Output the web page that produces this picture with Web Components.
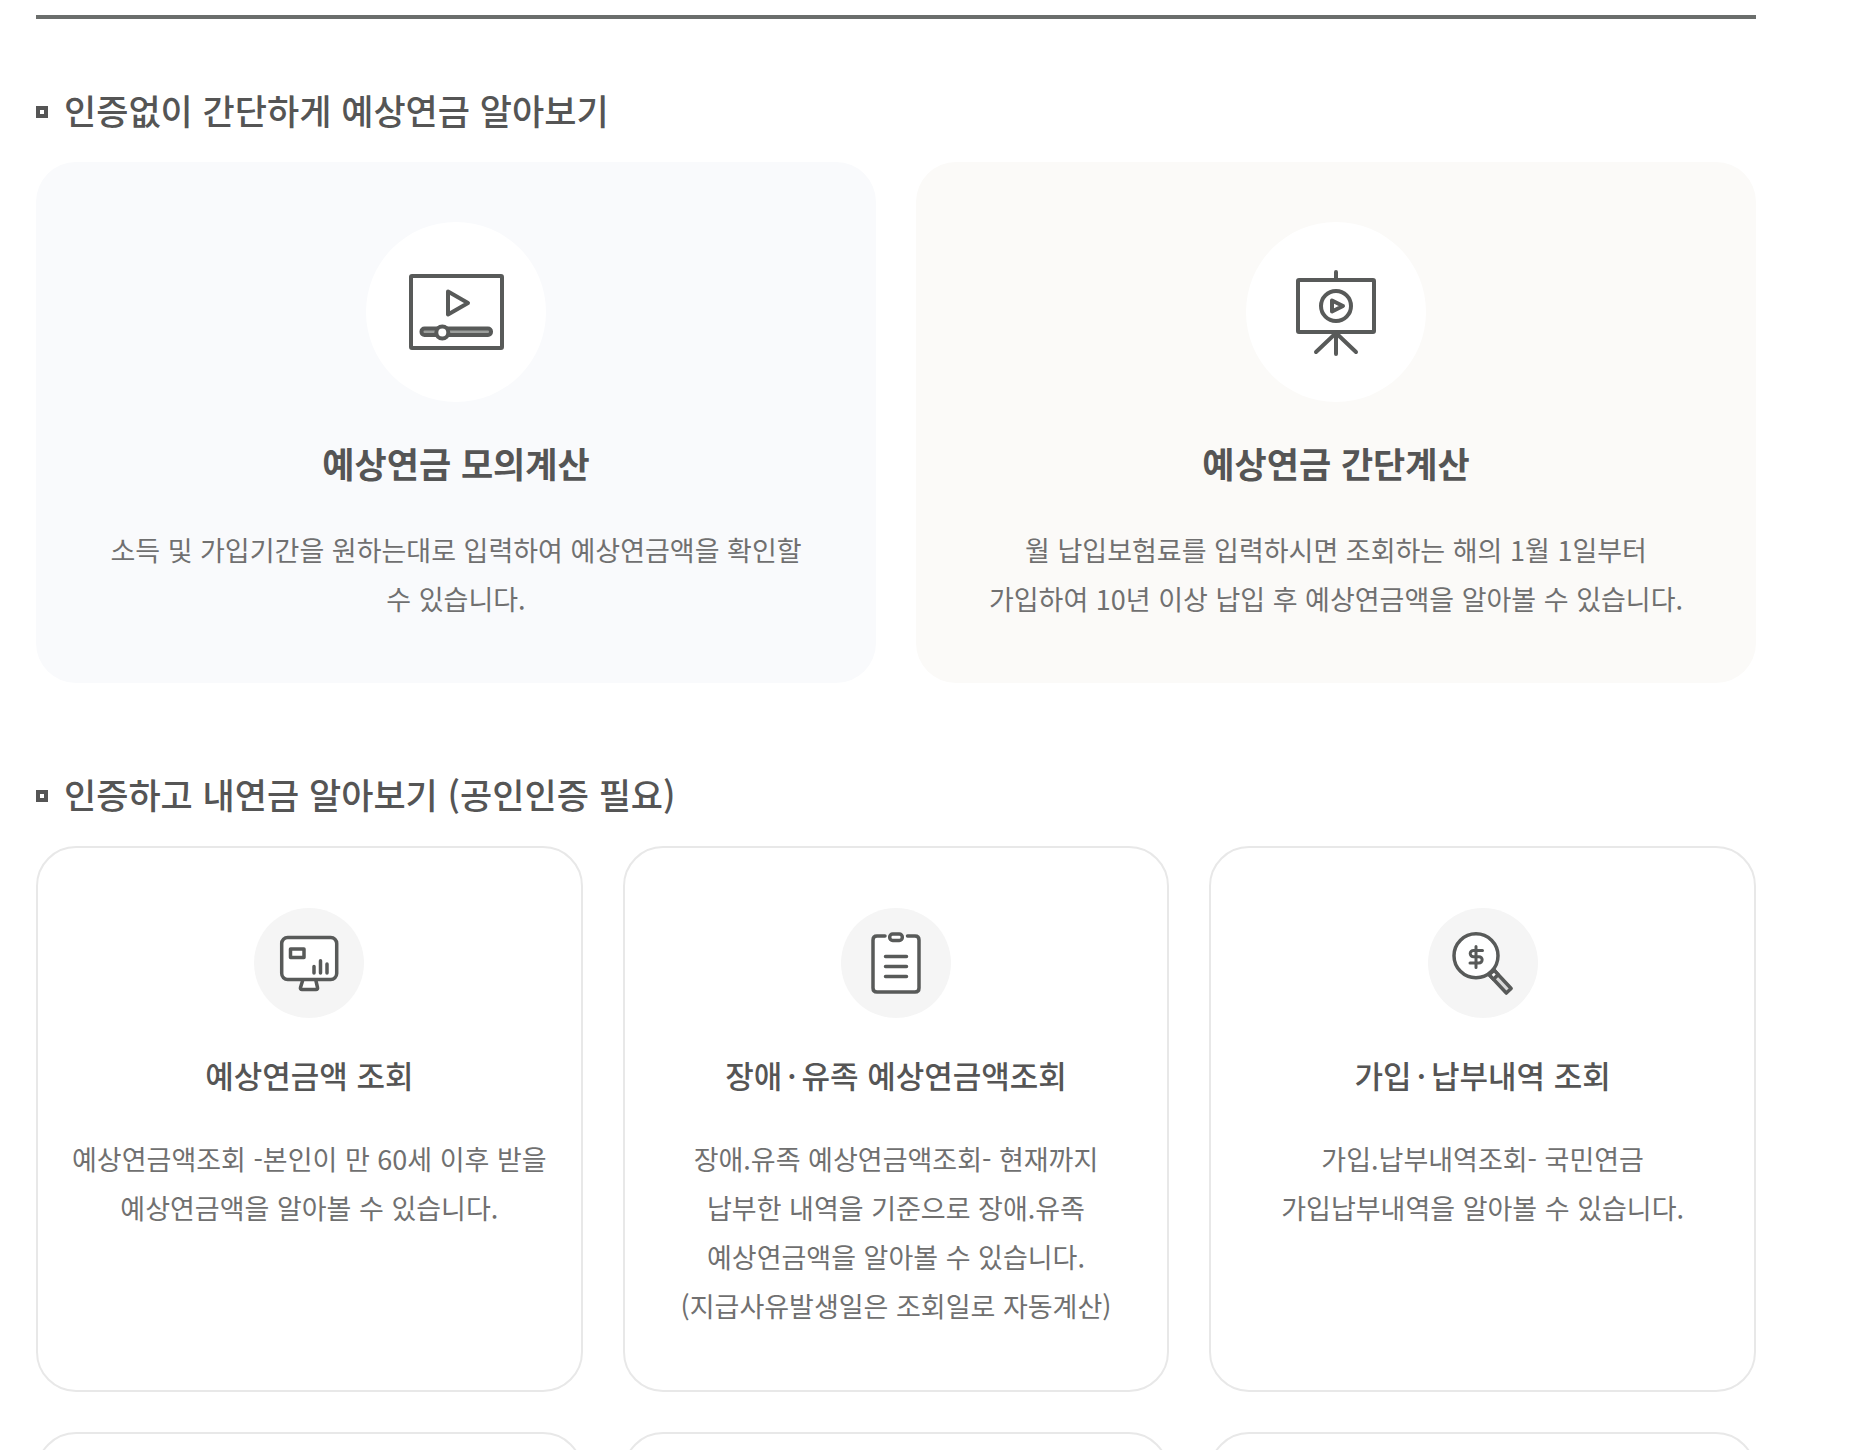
<!DOCTYPE html>
<html lang="ko">
<head>
<meta charset="utf-8">
<meta name="viewport" content="width=device-width, initial-scale=1">
<title>예상연금 알아보기</title>
<style>
html, body { margin: 0; height: 100%; }
body { overflow: hidden; background: #fff; color: #555; font-family: "Noto Sans CJK KR", "Noto Sans KR", sans-serif; }
.dot { margin: 0 5px; }
</style>
</head>
<body>
<pension-page>
  <pension-section>
    <span slot="title">인증없이 간단하게 예상연금 알아보기</span>
    <pension-card size="large" tone="blue" icon="video">
      <span slot="title">예상연금 모의계산</span>
      소득 및 가입기간을 원하는대로 입력하여 예상연금액을 확인할<br>수 있습니다.
    </pension-card>
    <pension-card size="large" tone="warm" icon="board">
      <span slot="title">예상연금 간단계산</span>
      월 납입보험료를 입력하시면 조회하는 해의 1월 1일부터<br>가입하여 10년 이상 납입 후 예상연금액을 알아볼 수 있습니다.
    </pension-card>
  </pension-section>
  <pension-section columns="3">
    <span slot="title">인증하고 내연금 알아보기 (공인인증 필요)</span>
    <pension-card icon="monitor">
      <span slot="title">예상연금액 조회</span>
      예상연금액조회 -본인이 만 60세 이후 받을<br>예상연금액을 알아볼 수 있습니다.
    </pension-card>
    <pension-card icon="clipboard">
      <span slot="title">장애<span class="dot">·</span>유족 예상연금액조회</span>
      장애.유족 예상연금액조회- 현재까지<br>납부한 내역을 기준으로 장애.유족<br>예상연금액을 알아볼 수 있습니다.<br>(지급사유발생일은 조회일로 자동계산)
    </pension-card>
    <pension-card icon="search">
      <span slot="title">가입<span class="dot">·</span>납부내역 조회</span>
      가입.납부내역조회- 국민연금<br>가입납부내역을 알아볼 수 있습니다.
    </pension-card>
    <pension-card></pension-card>
    <pension-card></pension-card>
    <pension-card></pension-card>
  </pension-section>
</pension-page>

<script>
const icons = {
  video: `<rect x="45" y="54" width="91" height="72" rx="1"/>
    <path d="M82 69.5 102 81 82 92.500Z"/>
    <rect x="55.500" y="106.500" width="69.500" height="6.500" rx="3" fill="#9b9e9c"/>
    <circle cx="76.300" cy="110.500" r="6" fill="#fff"/>`,
  board: `<path d="M90 50v8M90 110v22M90 111 70 130M90 111l20 19"/>
    <rect x="52" y="58" width="76" height="52" rx="1"/>
    <circle cx="90" cy="84" r="15"/><path d="M86 78.500v11L97 84Z"/>`,
  monitor: `<path d="M48.500 73 46.500 79.500Q46 81.500 48 81.500H62Q64 81.500 63.500 79.500L62 73" fill="#fff"/>
    <rect x="27.700" y="29.500" width="55" height="42" rx="6" fill="#fff"/>
    <rect x="36.500" y="41" width="13.500" height="8.500"/>
    <path d="M60 58.500V65M66.500 52.700V65M73 56V65"/>`,
  clipboard: `<path d="M44 28H36Q32 28 32 32V80Q32 84 36 84H74Q78 84 78 80V32Q78 28 74 28H66.500" fill="#fff"/>
    <rect x="48.700" y="26" width="12.600" height="6.500" rx="3" fill="#fff"/>
    <path d="M44.500 48.500h21M44.500 58.500h21M44.500 68.500h21"/>`,
  search: `<g transform="rotate(47 48 47.700)"><rect x="71" y="44.400" width="25" height="6.600" fill="#d8d8d8"/><path d="M71 44.400h6v6.600h-6Z" fill="#fff"/></g>
    <circle cx="48" cy="47.700" r="22" fill="#fff"/>
    <path stroke-width="3" d="M48 38.500V59.500M54.500 42.500H45.500A3.200 3 0 0 0 45.500 48.700H51A3 3 0 0 1 51 55H42"/>`
};

class PensionIcon extends HTMLElement {
  connectedCallback() {
    const size = this.getAttribute('size') === 'large' ? 180 : 110;
    this.attachShadow({ mode: 'open' }).innerHTML = `
      <style>
        :host { display: block; border-radius: 50%; overflow: hidden; background: var(--disc, #f5f5f5); }
        svg { display: block; fill: none; stroke: #585a59; stroke-width: ${size === 180 ? 4 : 3.5}; stroke-linecap: round; stroke-linejoin: round; }
      </style>
      <svg width="${size}" height="${size}" viewBox="0 0 ${size} ${size}" aria-hidden="true">${icons[this.getAttribute('name')]}</svg>`;
  }
}

class PensionCard extends HTMLElement {
  connectedCallback() {
    const size = this.getAttribute('size') || 'small';
    const icon = this.getAttribute('icon');
    this.attachShadow({ mode: 'open' }).innerHTML = `
      <style>
        :host { display: block; box-sizing: border-box; min-width: 0; min-height: 200px; border: 2px solid #e8e8e8; border-radius: 40px; background: #fff; }
        :host([size="large"]) { --disc: #fff; border: 0; }
        :host([tone="blue"]) { background: #f9fafc; }
        :host([tone="warm"]) { background: #fbfaf8; }
        article { display: flex; flex-direction: column; align-items: center; padding: 60px 20px; text-align: center; word-break: keep-all; }
        h3 { margin: 34px 0 36px; font-size: 31px; font-weight: 500; line-height: 46px; }
        :host([size="large"]) h3 { margin: 36px 0 37px; font-size: 35px; font-weight: 700; line-height: 50px; }
        p { margin: 0; color: #707070; font-size: 27px; line-height: 49px; }
      </style>
      ${icon ? `<article>
        <pension-icon name="${icon}" size="${size}"></pension-icon>
        <h3><slot name="title"></slot></h3>
        <p><slot></slot></p>
      </article>` : ''}`;
  }
}

class PensionSection extends HTMLElement {
  connectedCallback() {
    this.attachShadow({ mode: 'open' }).innerHTML = `
      <style>
        :host { display: block; }
        h2 { display: flex; align-items: flex-start; gap: 16px; margin: 0 0 28px; font-size: 35px; font-weight: 500; line-height: 48px; }
        h2::before { content: ""; box-sizing: border-box; width: 12px; height: 12px; margin-top: 20px; border: 4px solid #555; }
        .cards { display: grid; grid-template-columns: repeat(${this.getAttribute('columns') || 2}, minmax(0, 1fr)); gap: 40px; }
      </style>
      <section>
        <h2><slot name="title"></slot></h2>
        <div class="cards"><slot></slot></div>
      </section>`;
  }
}

class PensionPage extends HTMLElement {
  connectedCallback() {
    this.attachShadow({ mode: 'open' }).innerHTML = `
      <style>
        :host { display: block; padding: 15px 95px 0 36px; }
        main { display: flex; flex-direction: column; gap: 87px; padding-top: 67px; border-top: 4px solid #6b6e6c; }
      </style>
      <main><slot></slot></main>`;
  }
}

customElements.define('pension-icon', PensionIcon);
customElements.define('pension-card', PensionCard);
customElements.define('pension-section', PensionSection);
customElements.define('pension-page', PensionPage);
</script>
</body>
</html>
